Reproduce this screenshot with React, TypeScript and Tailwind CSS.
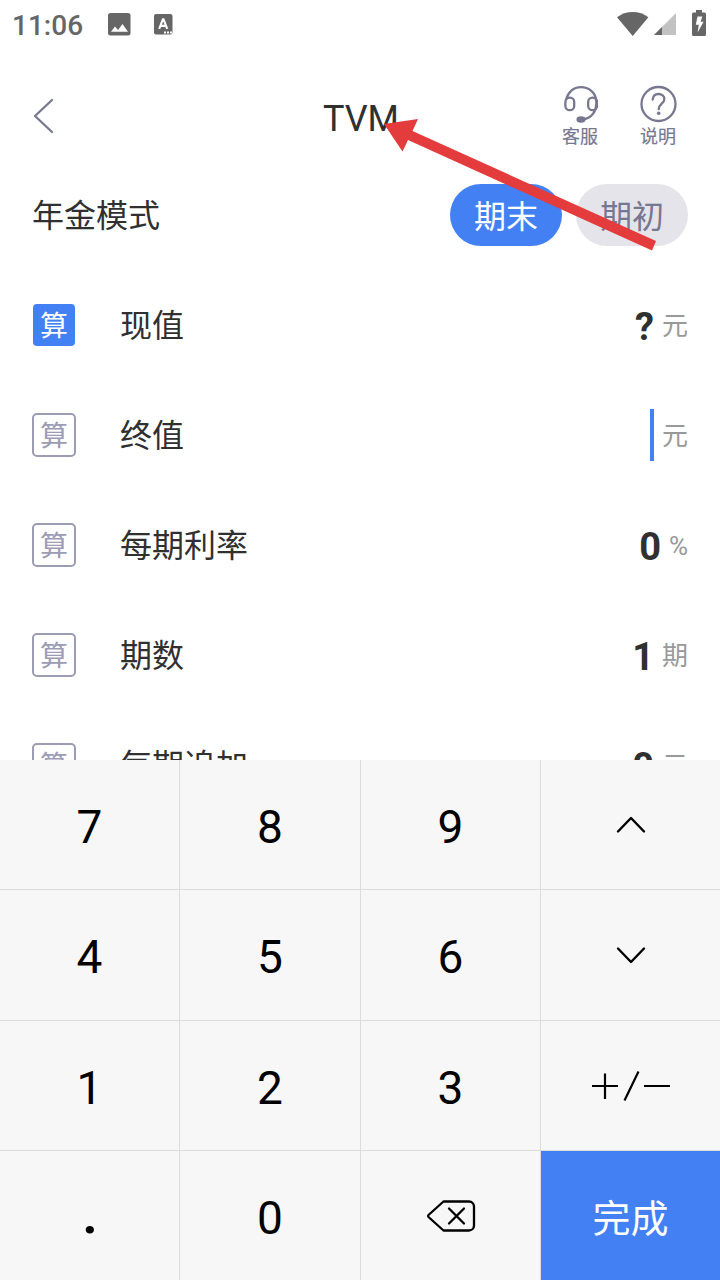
import type { ReactNode } from "react";

const rows = [
    { label: "现值", value: "?", unit: "元", active: true },
    { label: "终值", value: "", unit: "元", active: false },
    { label: "每期利率", value: "0", unit: "%", active: false },
    { label: "期数", value: "1", unit: "期", active: false },
    { label: "每期追加", value: "0", unit: "元", active: false },
];

function StatusBar() {
    return (
        <div className="flex h-12 shrink-0 items-center justify-between pl-3 pr-3.5 text-[#666666]">
            <div className="flex items-center">
                <span className="w-24 pt-1 text-[28px] font-medium leading-none">
                    11:06
                </span>
                <svg width="23" height="23" viewBox="0 0 23 23">
                    <rect width="22.5" height="22.5" rx="2.5" fill="currentColor" />
                    <path d="M3 18.8 7 13.5l3 3.5 4.5-6L20 18.8z" fill="#fff" />
                </svg>
                <svg className="ml-[23px]" width="19" height="21" viewBox="0 0 19 21">
                    <rect width="18.5" height="20.5" rx="2" fill="currentColor" />
                    <path
                        d="M5.2 14.8 8.9 5.2h.6l3.7 9.6M6.5 11.9h5.4"
                        fill="none"
                        stroke="#fff"
                        strokeWidth="2.1"
                    />
                    <path d="M10 17.4h2v2h-2zM13 17.4h2v2h-2zM16 17.4h2v2h-2z" fill="#fff" />
                </svg>
            </div>
            <div className="flex items-center">
                <svg width="32" height="24" viewBox="0 0 32 24">
                    <path d="M0 5.3C4.5 1.8 10 0 15.7 0s11.2 1.8 15.7 5.3L15.7 24z" fill="currentColor" />
                </svg>
                <svg className="ml-[5px]" width="22" height="22" viewBox="0 0 22 22">
                    <path d="M22 0v22H0z" fill="#c2c2c2" />
                    <path d="M8 14v8H0z" fill="currentColor" />
                </svg>
                <svg className="-mt-0.5 ml-4" width="14" height="26" viewBox="0 0 14 26">
                    <path
                        d="M4 0h6v2.5h2.5A1.5 1.5 0 0 1 14 4v20.5a1.5 1.5 0 0 1-1.5 1.5h-11A1.5 1.5 0 0 1 0 24.5V4a1.5 1.5 0 0 1 1.5-1.5H4z"
                        fill="currentColor"
                    />
                    <path d="M5.5 6.5h4.8L8.6 11.8h3L5.6 22.5l1.2-7.7h-3z" fill="#fff" />
                </svg>
            </div>
        </div>
    );
}

function Header() {
    return (
        <div className="grid h-28 shrink-0 grid-cols-3 px-8 text-[#77778f]">
            <svg className="mt-[50px]" width="24" height="36" viewBox="0 0 24 36">
                <path
                    d="M20 2 3 18l17 16"
                    fill="none"
                    stroke="currentColor"
                    strokeWidth="2.3"
                    strokeLinecap="round"
                    strokeLinejoin="round"
                />
            </svg>
            <h1 className="mt-[49px] pl-0.5 text-center text-[36px] leading-[44px] text-[#303030]">
                TVM
            </h1>
            <div className="mt-[37px] flex justify-end gap-[42px] pr-3 text-[18px] leading-[22px]">
                <div className="flex w-9 flex-col items-center gap-[3px]">
                    <svg
                        width="36"
                        height="38"
                        viewBox="0 0 36 38"
                        fill="none"
                        stroke="currentColor"
                        strokeWidth="2.3"
                    >
                        <path d="M4.3 14.5C5.8 7 11.5 2.200 19 2.200S33.200 7 34 14.500c2 11-4.500 19.500-14 20" />
                        <rect x="3.4" y="12.6" width="8.8" height="12.6" rx="4.3" />
                        <rect x="26.200" y="12.6" width="8.8" height="12.6" rx="4.3" />
                        <ellipse cx="19" cy="34.5" rx="3.4" ry="2.1" fill="currentColor" />
                    </svg>
                    <span className="whitespace-nowrap [-webkit-text-stroke:0.2px]">客服</span>
                </div>
                <div className="flex w-9 flex-col items-center gap-[3px]">
                    <svg
                        width="38"
                        height="38"
                        viewBox="0 0 38 38"
                        fill="none"
                        stroke="currentColor"
                        strokeWidth="2.3"
                        className="-mx-px shrink-0"
                    >
                        <circle cx="19.5" cy="19" r="17" />
                        <path
                            d="M13.7 14.5c.3-3.5 2.6-5.500 5.800-5.500 3.400 0 5.800 2.200 5.800 5.200 0 4.500-5.600 4.600-5.600 10"
                            strokeLinecap="round"
                        />
                        <circle cx="19.7" cy="28.3" r="1.8" fill="currentColor" stroke="none" />
                    </svg>
                    <span className="whitespace-nowrap [-webkit-text-stroke:0.2px]">说明</span>
                </div>
            </div>
        </div>
    );
}

function Key({ children }: { children: ReactNode }) {
    return (
        <button className="flex items-center justify-center bg-[#f7f7f7] pt-1 text-[46px] leading-none text-black">
            {children}
        </button>
    );
}

function Chevron({ d }: { d: string }) {
    return (
        <svg width="30" height="18" viewBox="0 0 30 18" className="-mt-1">
            <path
                d={d}
                fill="none"
                stroke="currentColor"
                strokeWidth="2.4"
                strokeLinecap="round"
                strokeLinejoin="round"
            />
        </svg>
    );
}

function Keypad() {
    return (
        <div className="grid h-[520px] shrink-0 grid-cols-[179px_180px_179px_179px] grid-rows-[129px_130px_129px_129px] gap-px bg-[#dcdcdc]">
            <Key>7</Key>
            <Key>8</Key>
            <Key>9</Key>
            <Key>
                <Chevron d="M2 15.5 15 2l13 13.5" />
            </Key>
            <Key>4</Key>
            <Key>5</Key>
            <Key>6</Key>
            <Key>
                <Chevron d="M2 2.5 15 16 28 2.5" />
            </Key>
            <Key>1</Key>
            <Key>2</Key>
            <Key>3</Key>
            <Key>
                <svg width="80" height="32" viewBox="0 0 80 32" className="-mt-1">
                    <path
                        d="M1 16h26M14 3.5v25.5M47.5 1.5 33.5 30.5M53 16h26"
                        fill="none"
                        stroke="currentColor"
                        strokeWidth="2.2"
                    />
                </svg>
            </Key>
            <Key>
                <span className="pb-1 pl-px text-[52px] font-bold">.</span>
            </Key>
            <Key>0</Key>
            <Key>
                <svg
                    width="50"
                    height="34"
                    viewBox="0 0 50 34"
                    className="-mt-1"
                    fill="none"
                    stroke="currentColor"
                    strokeWidth="2.3"
                    strokeLinecap="round"
                    strokeLinejoin="round"
                >
                    <path d="M17.5 2.5H43a5 5 0 0 1 5 5v19a5 5 0 0 1-5 5H17.5L2.5 18a1.5 1.5 0 0 1 0-2z" />
                    <path d="m23 9.5 15 15M38 9.5l-15 15" />
                </svg>
            </Key>
            <button className="flex items-center justify-center bg-[#4280f4] pt-1.5 text-[38px] leading-none text-white">
                完成
            </button>
        </div>
    );
}

function App() {
    return (
        <div className="relative flex h-[1280px] w-[720px] flex-col overflow-hidden bg-white font-['Roboto','Noto_Sans_CJK_SC',sans-serif] text-[#303030]">
            <div className="flex h-[760px] shrink-0 flex-col overflow-hidden">
                <StatusBar />
                <Header />
                <div className="flex h-[110px] shrink-0 items-center px-8 text-[32px] leading-none">
                    <span className="pt-0.5">年金模式</span>
                    <button className="ml-auto h-[62px] w-28 rounded-full bg-[#4280f4] pt-1 text-white">
                        期末
                    </button>
                    <button className="ml-3.5 h-[62px] w-28 rounded-full bg-[#e4e4ea] pt-1 text-[#77778f]">
                        期初
                    </button>
                </div>
                {rows.map((row) => (
                    <div
                        key={row.label}
                        className="flex h-[110px] shrink-0 items-center px-8"
                    >
                        {row.active ? (
                            <span className="m-px flex size-[42px] items-center justify-center rounded bg-[#4280f4] pt-1 text-[28px] leading-none text-white">
                                算
                            </span>
                        ) : (
                            <span className="flex size-11 items-center justify-center rounded-[5px] border-2 border-[#9c9cb5] pt-1 text-[28px] leading-none text-[#9c9cb5]">
                                算
                            </span>
                        )}
                        <span className="ml-11 pt-0.5 text-[32px] leading-none">{row.label}</span>
                        <div className="ml-auto flex items-center gap-2">
                            {row.value ? (
                                <span className="pt-1 text-[38px] font-bold leading-none">
                                    {row.value}
                                </span>
                            ) : (
                                <span className="h-[52px] w-1 bg-[#4280f4]" />
                            )}
                            <span className="pt-0.5 text-[26px] leading-none text-[#999999]">
                                {row.unit}
                            </span>
                        </div>
                    </div>
                ))}
            </div>
            <Keypad />
            {/* red pointer over the title */}
            <svg
                className="pointer-events-none absolute left-[380px] top-[110px]"
                width="280"
                height="145"
                viewBox="380 110 280 145"
            >
                <path d="M384 124 418 119 412.5 131 656 241 652 250.5 408 140 402.5 151.5z" fill="#e43b3c" />
            </svg>
        </div>
    );
}
export default App;
